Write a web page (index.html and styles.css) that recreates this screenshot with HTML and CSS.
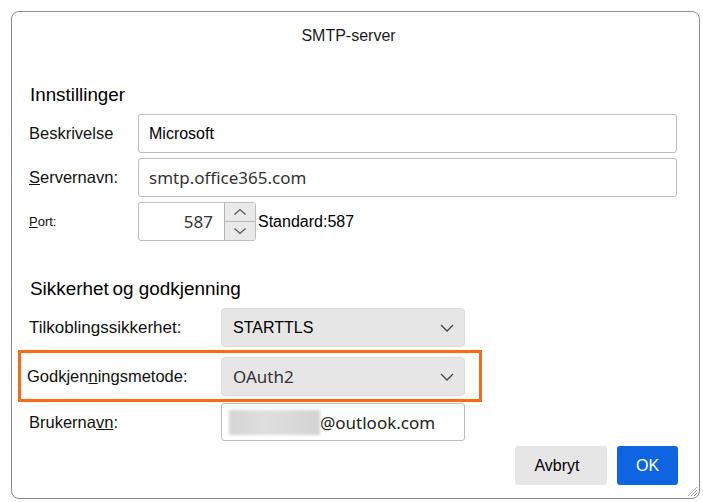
FILE: index.html
```html
<!DOCTYPE html>
<html>
<head>
    <title>SMTP-server</title>
    <link rel="stylesheet" href="styles.css">
</head>
<body>
    <div class="dialog">
        <div class="title">SMTP-server</div>

        <h2 class="heading">Innstillinger</h2>
        <div class="settings">
            <label class="label">Beskrivelse</label>
            <div class="field"><span class="value value-sans">Microsoft</span></div>

            <label class="label"><u>S</u>ervernavn:</label>
            <div class="field"><span class="value">smtp.office365.com</span></div>

            <label class="label label-small"><u>P</u>ort:</label>
            <div class="port-row">
                <div class="port">
                    <span class="port-value">587</span>
                    <div class="spinner">
                        <div class="spin">
                            <svg width="14" height="8" viewBox="0 0 14 8"><polyline points="1.5,6.5 7,1.5 12.5,6.5" fill="none" stroke="#555" stroke-width="1.2"/></svg>
                        </div>
                        <div class="spin">
                            <svg width="14" height="8" viewBox="0 0 14 8"><polyline points="1.5,1.5 7,6.5 12.5,1.5" fill="none" stroke="#555" stroke-width="1.2"/></svg>
                        </div>
                    </div>
                </div>
                <span class="default">Standard:587</span>
            </div>
        </div>

        <h2 class="heading heading-security">Sikkerhet&#8201;og godkjenning</h2>
        <div class="security">
            <div class="sec-row">
                <span class="label label-wide">Tilkoblingssikkerhet:</span>
                <div class="select"><span class="select-text value-sans">STARTTLS</span>
                    <svg width="14" height="8" viewBox="0 0 14 8"><polyline points="1,1 7,7 13,1" fill="none" stroke="#444" stroke-width="1.3"/></svg>
                </div>
            </div>
            <div class="sec-row highlight">
                <span class="label">Godkjen<u>n</u>ingsmetode:</span>
                <div class="select"><span class="select-text muted">OAuth2</span>
                    <svg width="14" height="8" viewBox="0 0 14 8"><polyline points="1,1 7,7 13,1" fill="none" stroke="#444" stroke-width="1.3"/></svg>
                </div>
            </div>
            <div class="sec-row user-row">
                <span class="label">Brukerna<u>vn</u>:</span>
                <div class="field user-field">
                    <span class="blur"></span><span class="value user-value">@outlook.com</span>
                </div>
            </div>
        </div>

        <div class="buttons">
            <button class="btn btn-cancel">Avbryt</button>
            <button class="btn btn-ok">OK</button>
        </div>

        <svg class="grip" width="12" height="12" viewBox="0 0 12 12">
            <line x1="11" y1="2" x2="2" y2="11" stroke="#aaa" stroke-width="1"/>
            <line x1="11" y1="5" x2="5" y2="11" stroke="#aaa" stroke-width="1"/>
            <line x1="11" y1="8" x2="8" y2="11" stroke="#aaa" stroke-width="1"/>
        </svg>
    </div>
</body>
</html>
```

FILE: styles.css
```css
:root {
    --text-color: #111111;
    --value-color: #333333;
    --border-color: #bdbdbd;
    --select-bg: #e6e6e6;
    --accent-orange: #fb6a16;
    --ok-blue: #0f65e0;
}

* {
    box-sizing: border-box;
    margin: 0;
    padding: 0;
}

body {
    font-family: 'Liberation Sans', Arial, sans-serif;
    background-color: #ffffff;
    color: var(--text-color);
}

.dialog {
    position: relative;
    margin: 11px 0 0 11px;
    width: 689px;
    height: 488px;
    border: 1px solid #8c8c8c;
    border-radius: 8px;
    background-color: #ffffff;
}

.title {
    height: 48px;
    display: flex;
    align-items: center;
    justify-content: center;
    padding-right: 14px;
    font-size: 16px;
    color: #1a1a1a;
}

.heading {
    font-size: 18.8px;
    font-weight: 400;
    line-height: 22px;
    margin: 24px 0 8px 18px;
    color: #000;
}

.heading-security {
    margin-top: 37px;
    font-size: 18.9px;
}

.settings {
    display: grid;
    grid-template-columns: 109px 539px;
    grid-auto-rows: 39px;
    row-gap: 5px;
    padding-left: 17px;
    align-items: center;
}

.label {
    font-size: 16.5px;
    color: #111;
}

.label-wide {
    font-size: 17px;
}

.label-small {
    font-size: 13px;
}

.field {
    height: 100%;
    border: 1px solid var(--border-color);
    border-radius: 3px;
    display: flex;
    align-items: center;
    padding-left: 10px;
}

.value {
    font-family: 'Noto Sans', sans-serif;
    font-size: 17px;
    color: var(--value-color);
}

.value-sans {
    font-family: 'Liberation Sans', Arial, sans-serif;
    font-size: 16px;
    color: #000;
}

.port-row {
    display: flex;
    align-items: center;
    height: 100%;
}

.port {
    width: 118px;
    height: 100%;
    border: 1px solid var(--border-color);
    border-radius: 3px;
    display: flex;
    overflow: hidden;
}

.port-value {
    flex: 1;
    display: flex;
    align-items: center;
    justify-content: flex-end;
    padding-right: 11px;
    font-family: 'Noto Sans', sans-serif;
    font-size: 17px;
    color: var(--value-color);
}

.spinner {
    width: 31px;
    display: flex;
    flex-direction: column;
    border-left: 1px solid #b5b5b5;
}

.spin {
    flex: 1;
    display: flex;
    align-items: center;
    justify-content: center;
    background-color: #e9e9e9;
}

.spin + .spin {
    border-top: 1px solid #b5b5b5;
}

.default {
    margin-left: 2px;
    font-size: 16px;
    color: #000;
}

.security {
    display: flex;
    flex-direction: column;
}

.sec-row {
    display: grid;
    grid-template-columns: 192px 244px;
    align-items: center;
    padding-left: 17px;
    height: 39px;
}

.highlight {
    margin: 3px 0 0 6px;
    width: 464px;
    height: 52px;
    border: 3px solid var(--accent-orange);
    padding: 4px 0 3px 6px;
    grid-template-columns: 194px 244px;
}

.user-row {
    margin-top: 1px;
    height: 38px;
}

.select {
    height: 39px;
    background-color: var(--select-bg);
    border: 1px solid #dcdcdc;
    border-radius: 4px;
    display: flex;
    align-items: center;
    justify-content: space-between;
    padding: 0 10px 0 11px;
}

.select-text {
    font-size: 16px;
}

.muted {
    font-family: 'Noto Sans', sans-serif;
    font-size: 17px;
    color: var(--value-color);
}

.user-field {
    padding-left: 7px;
}

.blur {
    display: inline-block;
    width: 91px;
    height: 25px;
    background: linear-gradient(90deg, #d4d4d4, #dedede 40%, #d9d9d9 70%, #d2d2d2);
    filter: blur(1.5px);
}

.user-value {
    color: #222;
}

.buttons {
    display: flex;
    justify-content: flex-end;
    gap: 10px;
    margin-top: 5px;
    padding-right: 21px;
}

.btn {
    height: 39px;
    border: none;
    border-radius: 3px;
    font-family: 'Liberation Sans', Arial, sans-serif;
    font-size: 16px;
}

.btn-cancel {
    width: 92px;
    padding-right: 8px;
    background-color: #e6e6e6;
    color: #000;
}

.btn-ok {
    width: 61px;
    background-color: var(--ok-blue);
    color: #ffffff;
}

.grip {
    position: absolute;
    right: 1px;
    bottom: 1px;
}
```
